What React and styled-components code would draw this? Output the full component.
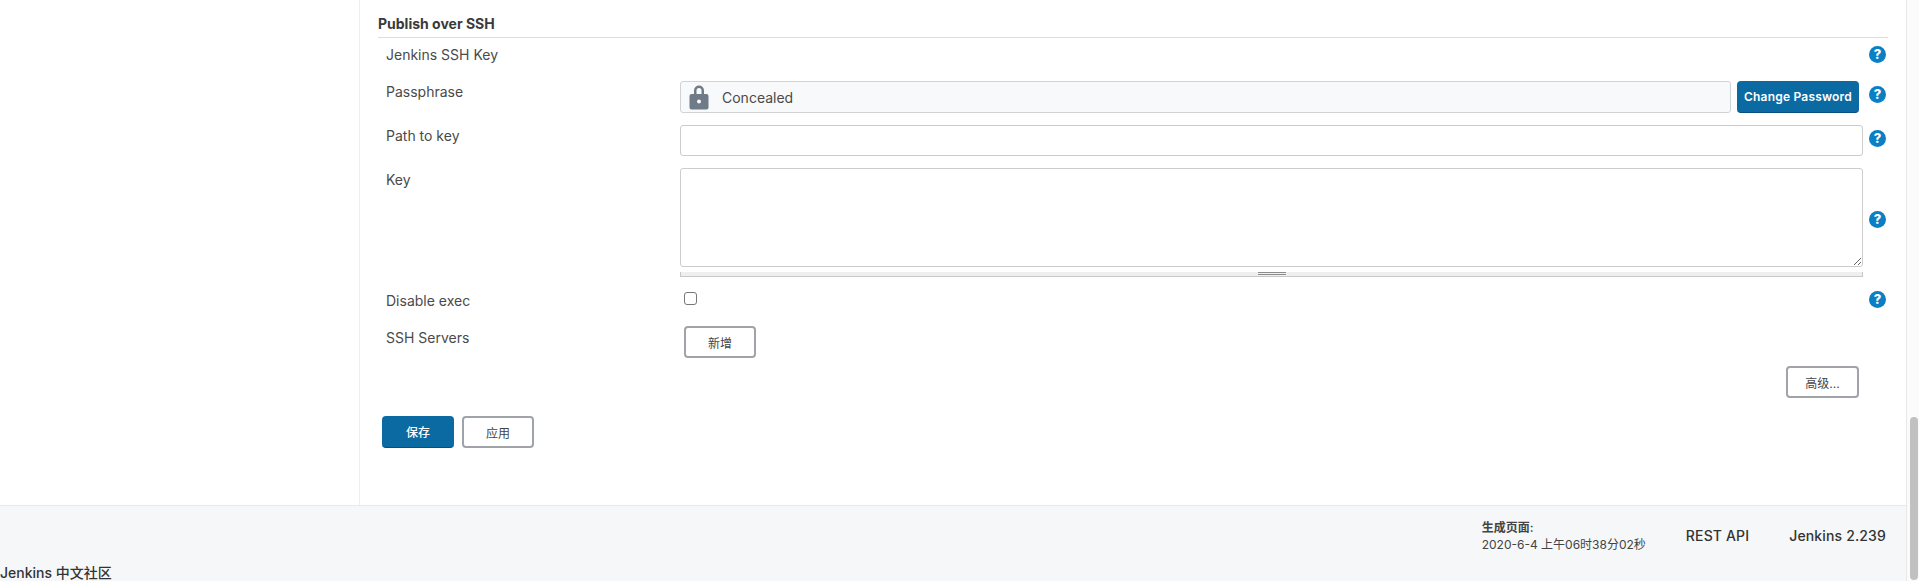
import React from 'react';
import styled, { createGlobalStyle } from 'styled-components';

const GlobalStyle = createGlobalStyle`
  html, body {
    margin: 0;
    height: 100%;
    overflow: hidden;
    background: #fff;
  }
  body {
    font-family: Inter, "Noto Sans CJK SC", "Liberation Sans", sans-serif;
    font-size: 13px;
    color: #333;
  }
`;

const Page = styled.div`
  display: flex;
  height: 581px;
`;

const Viewport = styled.div`
  flex: 1;
  min-width: 0;
  overflow: hidden;
`;

const Body = styled.div`
  display: flex;
  height: 505px;
`;

const Sidebar = styled.div`
  width: 359px;
  flex: none;
  border-right: 1px solid #eceef0;
`;

const Main = styled.main`
  flex: 1;
  min-width: 0;
  padding: 0 18px 0 18px;
`;

const SectionHeader = styled.h3`
  margin: 0;
  height: 38px;
  box-sizing: border-box;
  padding-top: 15px;
  font-size: 14px;
  line-height: 18px;
  font-weight: 700;
  color: #3a3a3a;
  border-bottom: 1px solid #dcdfe2;
`;

const Row = styled.div`
  display: grid;
  grid-template-columns: 294px 1183px 1fr;
  padding-left: 8px;
  margin-top: ${(p) => p.$top || 0}px;
  min-height: ${(p) => p.$height || 0}px;
`;

const Label = styled.div`
  font-size: 14px;
  line-height: 18px;
  color: #4a4a4a;
  padding-top: ${(p) => p.$top ?? 3}px;
`;

const Field = styled.div`
  display: flex;
  align-items: flex-start;
  gap: 6px;
  min-width: 0;
`;

const HelpCell = styled.div`
  display: flex;
  align-items: flex-start;
  padding-left: 6px;
  padding-top: ${(p) => p.$top || 0}px;
`;

const HelpIcon = styled.span`
  display: block;
  width: 17px;
  height: 17px;
  border-radius: 50%;
  background: #0b7fc4;
  color: #fff;
  font-size: 13px;
  line-height: 17px;
  font-weight: 800;
  text-align: center;
`;

const ConcealedBox = styled.div`
  flex: 1;
  height: 32px;
  box-sizing: border-box;
  display: flex;
  align-items: center;
  padding-left: 8px;
  gap: 13px;
  background: #f8f9fa;
  border: 1px solid #d0d3d6;
  border-radius: 3px;
  font-size: 14px;
  color: #4a4a4a;
`;

const TextInput = styled.input`
  display: block;
  width: 100%;
  height: 31px;
  box-sizing: border-box;
  background: #fff;
  border: 1px solid #ccc;
  border-radius: 3px;
  outline: none;
`;

const KeyWrap = styled.div`
  width: 100%;
`;

const KeyArea = styled.textarea`
  display: block;
  width: 100%;
  height: 99px;
  box-sizing: border-box;
  background: #fff;
  border: 1px solid #ccc;
  border-radius: 3px;
  outline: none;
  resize: vertical;
`;

const GripBar = styled.div`
  display: flex;
  justify-content: center;
  height: 5px;
  box-sizing: border-box;
  margin-top: 5px;
  background: #efefef;
  border: 1px solid #c8c8c8;
  border-top: 0;
`;

const GripMark = styled.div`
  width: 28px;
  height: 3px;
  box-sizing: border-box;
  border-top: 1px solid #8c8c8c;
  border-bottom: 1px solid #8c8c8c;
`;

const Checkbox = styled.input`
  appearance: none;
  display: block;
  width: 13px;
  height: 13px;
  margin: 1px 0 0 4px;
  box-sizing: border-box;
  background: #fff;
  border: 1px solid #777;
  border-radius: 3px;
`;

const Button = styled.button`
  width: ${(p) => p.$width}px;
  height: 32px;
  padding: 0;
  box-sizing: border-box;
  font-family: inherit;
  font-size: 12px;
  font-weight: ${(p) => (p.$primary ? 500 : 400)};
  color: ${(p) => (p.$primary ? '#fff' : '#444')};
  background: ${(p) => (p.$primary ? '#0b6aa2' : '#fff')};
  border: ${(p) => (p.$primary ? '0' : '2px solid #a0a4a8')};
  border-bottom: ${(p) => (p.$primary ? '1px solid #08507c' : '2px solid #a0a4a8')};
  border-radius: 4px;
  flex: none;
`;

const ChangePasswordButton = styled(Button)`
  margin-right: 4px;
  font-weight: 600;
  letter-spacing: 0.2px;
`;

const AddButton = styled(Button)`
  margin-left: 4px;
`;

const AdvancedRow = styled.div`
  display: flex;
  justify-content: flex-end;
  margin-top: 8px;
  padding-right: 29px;
`;

const Actions = styled.div`
  display: flex;
  gap: 8px;
  margin-top: 18px;
  padding-left: 4px;
`;

const Footer = styled.footer`
  height: 76px;
  box-sizing: border-box;
  background: #f6f7f8;
  border-top: 1px solid #e6e8ea;
`;

const FooterLinks = styled.div`
  display: flex;
  justify-content: flex-end;
  align-items: center;
  height: 59px;
  padding-right: 20px;
  gap: 40px;
`;

const PageGenerated = styled.div`
  font-size: 12px;
  line-height: 17px;
  color: #444;
`;

const GeneratedTitle = styled.div`
  font-weight: 600;
`;

const FooterLink = styled.span`
  font-size: 14px;
  font-weight: 500;
  letter-spacing: 0.15px;
  color: #333;
`;

const CommunityLink = styled.div`
  font-size: 14px;
  line-height: 16px;
  font-weight: 500;
  color: #333;
`;

const ScrollGutter = styled.div`
  width: 13px;
  flex: none;
  box-sizing: border-box;
  display: flex;
  flex-direction: column;
  justify-content: flex-end;
  background: #fbfbfc;
  border-left: 1px solid #e8e8e8;
`;

const ScrollThumb = styled.div`
  height: 163px;
  width: 8px;
  margin: 0 0 1px 3px;
  border-radius: 4px;
  background: #c1c1c1;
`;

const LockIcon = () => (
  <svg width="20" height="26" viewBox="0 0 20 26" aria-hidden="true">
    <path
      fill="#6f7b87"
      fillRule="evenodd"
      d="M5 10V6.500a5 5 0 0 1 10 0V10h2.500a2 2 0 0 1 2 2v11.500a2 2 0 0 1-2 2h-15a2 2 0 0 1-2-2V12a2 2 0 0 1 2-2H5zm2.500 0h5V6.500a2.500 2.500 0 0 0-5 0V10zM10 15.500a2 2 0 1 0 0 4 2 2 0 0 0 0-4z"
    />
  </svg>
);

const Help = ({ top }) => (
  <HelpCell $top={top}>
    <HelpIcon>?</HelpIcon>
  </HelpCell>
);

export default function App() {
  return (
    <Page>
      <GlobalStyle />
      <Viewport>
        <Body>
          <Sidebar />
          <Main>
            <SectionHeader>Publish over SSH</SectionHeader>
            <Row $height={43}>
              <Label $top={8}>Jenkins SSH Key</Label>
              <Field />
              <Help top={8} />
            </Row>
            <Row>
              <Label $top={2}>Passphrase</Label>
              <Field>
                <ConcealedBox>
                  <LockIcon />
                  Concealed
                </ConcealedBox>
                <ChangePasswordButton $primary $width={122}>Change Password</ChangePasswordButton>
              </Field>
              <Help top={5} />
            </Row>
            <Row $top={12}>
              <Label $top={2}>Path to key</Label>
              <Field>
                <TextInput type="text" />
              </Field>
              <Help top={5} />
            </Row>
            <Row $top={12}>
              <Label>Key</Label>
              <Field>
                <KeyWrap>
                  <KeyArea />
                  <GripBar>
                    <GripMark />
                  </GripBar>
                </KeyWrap>
              </Field>
              <Help top={43} />
            </Row>
            <Row $top={14}>
              <Label $top={1}>Disable exec</Label>
              <Field>
                <Checkbox type="checkbox" />
              </Field>
              <Help />
            </Row>
            <Row $top={16}>
              <Label $top={3}>SSH Servers</Label>
              <Field>
                <AddButton $width={72}>新增</AddButton>
              </Field>
            </Row>
            <AdvancedRow>
              <Button $width={73}>高级...</Button>
            </AdvancedRow>
            <Actions>
              <Button $primary $width={72}>保存</Button>
              <Button $width={72}>应用</Button>
            </Actions>
          </Main>
        </Body>
        <Footer>
          <FooterLinks>
            <PageGenerated>
              <GeneratedTitle>生成页面:</GeneratedTitle>
              2020-6-4 上午06时38分02秒
            </PageGenerated>
            <FooterLink>REST API</FooterLink>
            <FooterLink>Jenkins 2.239</FooterLink>
          </FooterLinks>
          <CommunityLink>Jenkins 中文社区</CommunityLink>
        </Footer>
      </Viewport>
      <ScrollGutter>
        <ScrollThumb />
      </ScrollGutter>
    </Page>
  );
}
